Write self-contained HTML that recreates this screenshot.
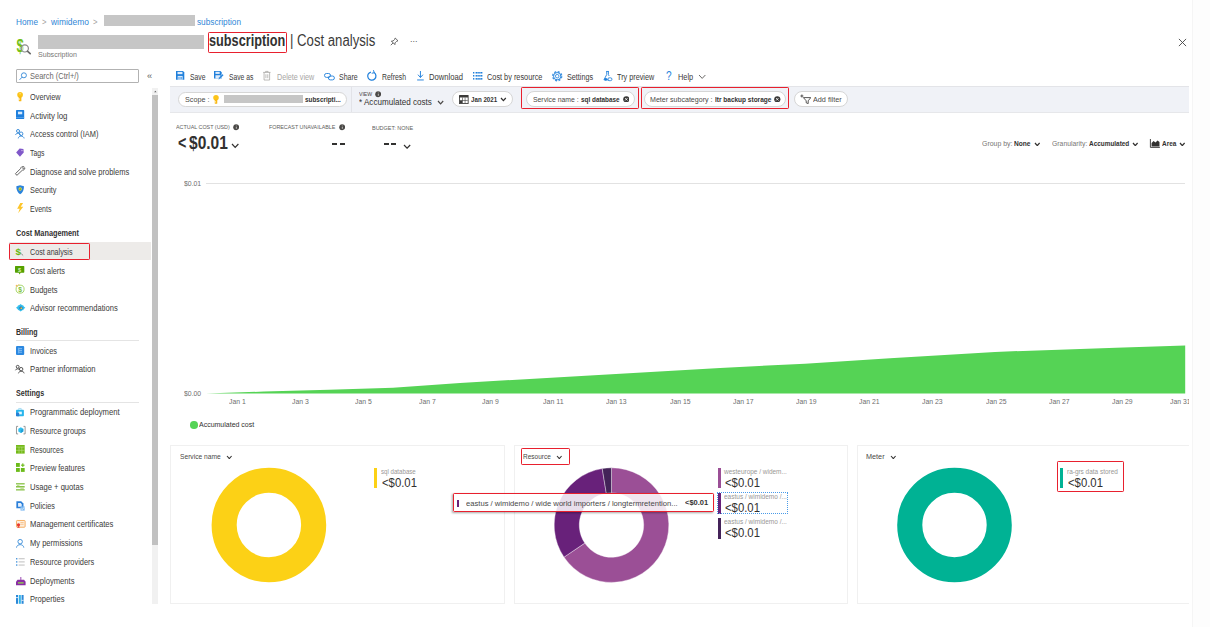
<!DOCTYPE html>
<html lang="en"><head><meta charset="utf-8"><title>Cost analysis</title>
<style>
html,body{margin:0;padding:0;background:#fff;}
body{width:1210px;height:627px;position:relative;overflow:hidden;font-family:"Liberation Sans",sans-serif;}
.t{position:absolute;white-space:nowrap;transform-origin:0 50%;display:block;}
.b{position:absolute;display:block;}
</style></head><body>
<div class="b" style="left:1192.00px;top:0.00px;width:18.00px;height:627.00px;background:#fdfdfd;border-left:1px solid #f5f5f5;"></div>
<span class="t" style="left:16.00px;top:17.24px;font-size:8.6px;line-height:10.32px;color:#2f86d6;transform:scaleX(0.9590);">Home</span>
<span class="t" style="left:42.00px;top:17.24px;font-size:8.6px;line-height:10.32px;color:#a3a19f;transform:scaleX(0.8960);">&gt;</span>
<span class="t" style="left:50.50px;top:17.24px;font-size:8.6px;line-height:10.32px;color:#2f86d6;transform:scaleX(0.9817);">wimidemo</span>
<span class="t" style="left:93.00px;top:17.24px;font-size:8.6px;line-height:10.32px;color:#a3a19f;transform:scaleX(0.8960);">&gt;</span>
<div class="b" style="left:104.00px;top:15.20px;width:91.00px;height:11.30px;background:#c6c6c6;"></div>
<span class="t" style="left:197.30px;top:17.24px;font-size:8.6px;line-height:10.32px;color:#2f86d6;transform:scaleX(0.9588);">subscription</span>
<svg class="b" style="left:16.00px;top:37.00px;" width="16.00" height="18.00" viewBox="0 0 16.00 18.00">
<text transform="translate(0.6 14.6) scale(0.74 1)" font-family="Liberation Sans, sans-serif" font-weight="bold" font-size="17.6" fill="#74c11a">$</text>
<circle cx="8.8" cy="11.4" r="3.6" fill="#fff" fill-opacity="0.55" stroke="#8a8a8a" stroke-width="1.2"/>
<path d="M11.4 14.2 L14.2 16.6" stroke="#6a6a6a" stroke-width="1.7" stroke-linecap="round"/>
</svg>
<div class="b" style="left:38.10px;top:35.40px;width:165.50px;height:13.60px;background:#c6c6c6;"></div>
<span class="t" style="left:208.60px;top:31.00px;font-size:16px;line-height:19.2px;color:#323130;font-weight:bold;transform:scaleX(0.7937);">subscription</span>
<span class="t" style="left:290.20px;top:31.00px;font-size:16px;line-height:19.2px;color:#3b3a39;transform:scaleX(0.8222);">| Cost analysis</span>
<div class="b" style="left:208.20px;top:32.20px;width:79.30px;height:21.10px;border:1.9px solid #e8202e;box-sizing:border-box;border-radius:1.2px;"></div>
<span class="t" style="left:38.00px;top:51.44px;font-size:6.6px;line-height:7.92px;color:#7a7876;transform:scaleX(1.0738);">Subscription</span>
<svg class="b" style="left:390.00px;top:37.00px;" width="9.00" height="9.00" viewBox="0 0 9.00 9.00"><g fill="none" stroke="#444" stroke-width="0.8" stroke-linejoin="round">
<path d="M5.2 1 L8 3.8 L6.6 4.3 L5 5.9 L4.9 7.6 L1.4 4.1 L3.1 4 L4.7 2.4 Z"/><path d="M3.1 5.9 L0.8 8.2"/></g></svg>
<span class="t" style="left:409.80px;top:36.20px;font-size:9px;line-height:10.8px;color:#444;transform:scaleX(0.8341);">···</span>
<svg class="b" style="left:1178.00px;top:37.50px;" width="9.00" height="9.00" viewBox="0 0 9.00 9.00"><path d="M0.9 0.9 L8.1 8.1 M8.1 0.9 L0.9 8.1" stroke="#444" stroke-width="0.9" fill="none"/></svg>
<div class="b" style="left:15.60px;top:69.00px;width:123.40px;height:14.00px;border:1px solid #b2b2b2;box-sizing:border-box;border-radius:1px;"></div>
<svg class="b" style="left:19.00px;top:72.00px;" width="8.00" height="8.50" viewBox="0 0 8.00 8.50"><circle cx="4.9" cy="3.3" r="2.5" fill="none" stroke="#2f86d6" stroke-width="0.9"/><path d="M3.1 5.1 L0.6 7.8" stroke="#2f86d6" stroke-width="0.9"/></svg>
<span class="t" style="left:30.20px;top:71.16px;font-size:8.4px;line-height:10.08px;color:#6b6967;transform:scaleX(0.8934);">Search (Ctrl+/)</span>
<span class="t" style="left:147.20px;top:70.70px;font-size:8.5px;line-height:10.2px;color:#605e5c;transform:scaleX(1.1000);">«</span>
<div class="b" style="left:151.70px;top:87.80px;width:6.70px;height:516.20px;background:#f1f1f1;"></div>
<div class="b" style="left:151.70px;top:95.30px;width:6.70px;height:450.00px;background:#c1c1c1;"></div>
<svg class="b" style="left:151.70px;top:88.00px;" width="6.70" height="7.00" viewBox="0 0 6.70 7.00"><path d="M2.1 4.3 L3.35 2.8 L4.6 4.3 Z" fill="#606060"/></svg>
<div class="b" style="left:9.40px;top:242.20px;width:141.90px;height:18.20px;background:#edebe9;"></div>
<div class="b" style="left:9.40px;top:243.00px;width:80.20px;height:16.60px;border:1.9px solid #e8202e;box-sizing:border-box;border-radius:1.2px;"></div>
<span class="t" style="left:30.20px;top:92.14px;font-size:8.6px;line-height:10.32px;color:#3b3a39;transform:scaleX(0.8538);">Overview</span>
<span class="t" style="left:30.20px;top:110.74px;font-size:8.6px;line-height:10.32px;color:#3b3a39;transform:scaleX(0.9124);">Activity log</span>
<span class="t" style="left:30.20px;top:129.44px;font-size:8.6px;line-height:10.32px;color:#3b3a39;transform:scaleX(0.8635);">Access control (IAM)</span>
<span class="t" style="left:30.20px;top:148.04px;font-size:8.6px;line-height:10.32px;color:#3b3a39;transform:scaleX(0.7982);">Tags</span>
<span class="t" style="left:30.20px;top:166.64px;font-size:8.6px;line-height:10.32px;color:#3b3a39;transform:scaleX(0.8764);">Diagnose and solve problems</span>
<span class="t" style="left:30.20px;top:185.34px;font-size:8.6px;line-height:10.32px;color:#3b3a39;transform:scaleX(0.8530);">Security</span>
<span class="t" style="left:30.20px;top:204.24px;font-size:8.6px;line-height:10.32px;color:#3b3a39;transform:scaleX(0.8178);">Events</span>
<span class="t" style="left:15.70px;top:227.84px;font-size:8.6px;line-height:10.32px;color:#323130;font-weight:bold;transform:scaleX(0.8506);">Cost Management</span>
<span class="t" style="left:30.20px;top:246.84px;font-size:8.6px;line-height:10.32px;color:#3b3a39;transform:scaleX(0.8310);">Cost analysis</span>
<span class="t" style="left:30.20px;top:265.74px;font-size:8.6px;line-height:10.32px;color:#3b3a39;transform:scaleX(0.8515);">Cost alerts</span>
<span class="t" style="left:30.20px;top:284.54px;font-size:8.6px;line-height:10.32px;color:#3b3a39;transform:scaleX(0.8714);">Budgets</span>
<span class="t" style="left:30.20px;top:303.24px;font-size:8.6px;line-height:10.32px;color:#3b3a39;transform:scaleX(0.8831);">Advisor recommendations</span>
<span class="t" style="left:15.70px;top:326.64px;font-size:8.6px;line-height:10.32px;color:#323130;font-weight:bold;transform:scaleX(0.8183);">Billing</span>
<div class="b" style="left:15.60px;top:340.20px;width:123.40px;height:0.80px;background:#e4e4e4;"></div>
<span class="t" style="left:30.20px;top:345.64px;font-size:8.6px;line-height:10.32px;color:#3b3a39;transform:scaleX(0.8558);">Invoices</span>
<span class="t" style="left:30.20px;top:364.34px;font-size:8.6px;line-height:10.32px;color:#3b3a39;transform:scaleX(0.8956);">Partner information</span>
<span class="t" style="left:15.70px;top:387.84px;font-size:8.6px;line-height:10.32px;color:#323130;font-weight:bold;transform:scaleX(0.8312);">Settings</span>
<div class="b" style="left:15.60px;top:402.00px;width:123.40px;height:0.80px;background:#e4e4e4;"></div>
<span class="t" style="left:30.20px;top:407.04px;font-size:8.6px;line-height:10.32px;color:#3b3a39;transform:scaleX(0.8937);">Programmatic deployment</span>
<span class="t" style="left:30.20px;top:425.84px;font-size:8.6px;line-height:10.32px;color:#3b3a39;transform:scaleX(0.8520);">Resource groups</span>
<span class="t" style="left:30.20px;top:444.54px;font-size:8.6px;line-height:10.32px;color:#3b3a39;transform:scaleX(0.8150);">Resources</span>
<span class="t" style="left:30.20px;top:463.24px;font-size:8.6px;line-height:10.32px;color:#3b3a39;transform:scaleX(0.8587);">Preview features</span>
<span class="t" style="left:30.20px;top:482.04px;font-size:8.6px;line-height:10.32px;color:#3b3a39;transform:scaleX(0.8846);">Usage + quotas</span>
<span class="t" style="left:30.20px;top:500.64px;font-size:8.6px;line-height:10.32px;color:#3b3a39;transform:scaleX(0.8436);">Policies</span>
<span class="t" style="left:30.20px;top:519.34px;font-size:8.6px;line-height:10.32px;color:#3b3a39;transform:scaleX(0.8912);">Management certificates</span>
<span class="t" style="left:30.20px;top:537.94px;font-size:8.6px;line-height:10.32px;color:#3b3a39;transform:scaleX(0.8789);">My permissions</span>
<span class="t" style="left:30.20px;top:556.84px;font-size:8.6px;line-height:10.32px;color:#3b3a39;transform:scaleX(0.8623);">Resource providers</span>
<span class="t" style="left:30.20px;top:575.84px;font-size:8.6px;line-height:10.32px;color:#3b3a39;transform:scaleX(0.8866);">Deployments</span>
<span class="t" style="left:30.20px;top:594.44px;font-size:8.6px;line-height:10.32px;color:#3b3a39;transform:scaleX(0.8802);">Properties</span>
<svg class="b" style="left:16.70px;top:91.70px;overflow:visible;" width="6.20" height="9.60" viewBox="0 0 10 15.5" preserveAspectRatio="none"><circle cx="5" cy="4.6" r="4.6" fill="#fcc419"/><rect x="2.9" y="7" width="4.2" height="8" rx="1" fill="#f9b915"/><rect x="2.9" y="10.6" width="1.8" height="1.6" fill="#fff"/><circle cx="5" cy="2.9" r="1.1" fill="#fde58a"/></svg>
<svg class="b" style="left:16.20px;top:110.40px;overflow:visible;" width="8.20" height="9.10" viewBox="0 0 10 11" preserveAspectRatio="none"><rect x="0" y="0" width="10" height="11" rx="0.8" fill="#1e7fdd"/><rect x="2.4" y="2" width="5.2" height="3.2" fill="#d6e9fb"/><rect x="0" y="8.6" width="10" height="0.9" fill="#5ea6ec"/></svg>
<svg class="b" style="left:15.30px;top:128.60px;overflow:visible;" width="9.50" height="9.60" viewBox="0 0 10 10" preserveAspectRatio="none"><g fill="none" stroke="#2f86d6" stroke-width="0.95"><circle cx="3.2" cy="2.1" r="1.6"/><path d="M0.6 6.2 C0.8 4 5.4 4 5.8 6"/><circle cx="6.4" cy="5" r="1.9"/><path d="M3.4 9.8 C3.8 6.6 9 6.6 9.6 9.8"/></g></svg>
<svg class="b" style="left:16.40px;top:147.70px;overflow:visible;" width="7.90" height="9.00" viewBox="0 0 10 11" preserveAspectRatio="none"><path d="M4.6 0.6 L9.4 1.2 L9.8 5.6 L5 10.6 L0.2 5.6 Z" fill="#8058c9"/><circle cx="7.6" cy="3.2" r="0.9" fill="#d9cdf2"/></svg>
<svg class="b" style="left:15.10px;top:166.20px;overflow:visible;" width="10.20" height="9.60" viewBox="0 0 10 10" preserveAspectRatio="none"><path d="M1 9 L0.4 8 L5.6 2.6 C5.6 1.2 7 0.2 8.6 0.6 L7.4 2 L8.2 3 L9.6 1.8 C9.8 3.4 8.6 4.6 7.2 4.4 L2 9.6 Z" fill="none" stroke="#555" stroke-width="0.9" stroke-linejoin="round"/></svg>
<svg class="b" style="left:16.40px;top:185.40px;overflow:visible;" width="8.30" height="9.50" viewBox="0 0 10 11.4" preserveAspectRatio="none"><path d="M5 0.2 L9.6 1.6 C9.8 6 8 9.4 5 11.2 C2 9.4 0.2 6 0.4 1.6 Z" fill="#2a84dc"/><circle cx="5" cy="4.8" r="2" fill="#f5d04a"/><path d="M3.6 5.6 L6.4 5.6 L5 3.4Z" fill="#6bb700"/></svg>
<svg class="b" style="left:17.00px;top:203.20px;overflow:visible;" width="6.40" height="10.20" viewBox="0 0 10 16" preserveAspectRatio="none"><path d="M5.2 0 L0.2 9.2 L4.2 9.2 L1.8 16 L9.8 5.8 L5.8 5.8 L9.6 0 Z" fill="#fdc52a"/></svg>
<svg class="b" style="left:16.10px;top:247.00px;overflow:visible;" width="7.30" height="9.00" viewBox="0 0 10 12.3" preserveAspectRatio="none"><text x="-0.6" y="10.9" font-family="Liberation Sans, sans-serif" font-weight="bold" font-size="13.6" fill="#66b80f">$</text><path d="M7 8.8 L9.8 11.6" stroke="#7a7a7a" stroke-width="1.2"/></svg>
<svg class="b" style="left:15.40px;top:265.50px;overflow:visible;" width="9.30" height="8.70" viewBox="0 0 10 9.4" preserveAspectRatio="none"><path d="M0.6 0 H9.4 Q10 0 10 0.6 V6.6 Q10 7.2 9.4 7.2 H6 L5 9.2 L4 7.2 H0.6 Q0 7.2 0 6.6 V0.6 Q0 0 0.6 0Z" fill="#55a100"/><text x="3.3" y="6" font-family="Liberation Sans, sans-serif" font-weight="bold" font-size="6" fill="#d8efb8">$</text></svg>
<svg class="b" style="left:15.40px;top:284.00px;overflow:visible;" width="9.60" height="9.60" viewBox="0 0 10 10" preserveAspectRatio="none"><circle cx="5.3" cy="5.4" r="4.2" fill="none" stroke="#a4d465" stroke-width="1"/><text x="3.4" y="8" font-family="Liberation Sans, sans-serif" font-weight="bold" font-size="7" fill="#7dc13c">$</text><circle cx="1.7" cy="1.9" r="1" fill="#f7b45a"/><circle cx="4" cy="0.6" r="0.7" fill="#f7c878"/></svg>
<svg class="b" style="left:15.70px;top:304.40px;overflow:visible;" width="9.30" height="7.60" viewBox="0 0 10 8.2" preserveAspectRatio="none"><path d="M5 0 L10 4 L5 8.2 L0 4 Z" fill="#33bdeb"/><path d="M2 1.6 H8 V6.6 H2Z" fill="#33bdeb"/><circle cx="5.3" cy="4.3" r="1.7" fill="#2b5ea8"/><circle cx="5.6" cy="4.5" r="0.9" fill="#f3d03a"/></svg>
<svg class="b" style="left:16.10px;top:345.70px;overflow:visible;" width="8.20" height="9.00" viewBox="0 0 10 11" preserveAspectRatio="none"><rect width="10" height="11" rx="1.3" fill="#2b88e0"/><g stroke="#9fcdf6" stroke-width="0.9"><path d="M3 3.2 H7.4 M3 5.4 H7.4 M3 7.6 H7.4"/></g><rect x="2.4" y="2" width="1.6" height="7" fill="#6db3f2"/></svg>
<svg class="b" style="left:15.40px;top:364.90px;overflow:visible;" width="9.60" height="8.50" viewBox="0 0 10 9" preserveAspectRatio="none"><g fill="none" stroke="#4a4a4a" stroke-width="1"><circle cx="2.8" cy="1.9" r="1.5"/><path d="M0.5 5.6 C0.7 3.6 4.8 3.6 5.2 5.4"/><circle cx="6.4" cy="4.4" r="1.8"/><path d="M3.6 8.8 C4 6 9 6 9.6 8.8"/></g></svg>
<svg class="b" style="left:16.10px;top:408.20px;overflow:visible;" width="7.90" height="8.30" viewBox="0 0 10 10.5" preserveAspectRatio="none"><path d="M3.4 2.2 V0.6 H6.6 V2.2" fill="none" stroke="#8fd3f0" stroke-width="0.9"/><rect x="0" y="2.2" width="10" height="8.2" rx="1" fill="#28b5ec"/><path d="M3 4.6 H7.4 V8 H3Z" fill="#e8f6fd"/><path d="M0 6 H4 V10.4 H1 Q0 10.4 0 9.4Z" fill="#2a7fd4"/></svg>
<svg class="b" style="left:15.60px;top:426.40px;overflow:visible;" width="9.60" height="8.30" viewBox="0 0 10 8.6" preserveAspectRatio="none"><path d="M2.2 0.4 H0.5 V8.2 H2.2 M7.8 0.4 H9.5 V8.2 H7.8" fill="none" stroke="#8a8a8a" stroke-width="0.9"/><path d="M5 1.4 L7.6 2.8 V5.8 L5 7.2 L2.4 5.8 V2.8Z" fill="#32bfee"/><path d="M5 4.2 L7.6 2.8 V5.8 L5 7.2Z" fill="#1e9fd6"/></svg>
<svg class="b" style="left:16.00px;top:445.20px;overflow:visible;" width="8.70" height="8.60" viewBox="0 0 10 10" preserveAspectRatio="none"><rect width="10" height="10" fill="#73b917"/><g stroke="#b9de86" stroke-width="0.7"><path d="M3.5 2.4 V10 M6.7 2.4 V10 M0 2.4 H10 M0 6.2 H10"/></g></svg>
<svg class="b" style="left:16.00px;top:463.40px;overflow:visible;" width="8.70" height="8.90" viewBox="0 0 10 10" preserveAspectRatio="none"><g fill="#6cbb1a"><rect x="0" y="0" width="4.4" height="4.4"/><rect x="0" y="5.6" width="4.4" height="4.4"/><rect x="5.6" y="5.6" width="4.4" height="4.4"/><rect x="7.2" y="0.4" width="1.3" height="4"/><rect x="5.8" y="1.8" width="4" height="1.3"/></g></svg>
<svg class="b" style="left:16.00px;top:483.00px;overflow:visible;" width="8.70" height="7.70" viewBox="0 0 10 8.8" preserveAspectRatio="none"><g fill="#76b82a"><rect x="0" y="0.3" width="10" height="1.3"/><rect x="0" y="3.6" width="10" height="1.5"/><rect x="0" y="7.2" width="10" height="1.3"/><rect x="1" y="2.2" width="3" height="0.9" fill="#a9d46f"/><rect x="5" y="5.6" width="4" height="0.9" fill="#a9d46f"/></g></svg>
<svg class="b" style="left:16.00px;top:501.00px;overflow:visible;" width="8.70" height="9.60" viewBox="0 0 10 11" preserveAspectRatio="none"><path d="M0.4 0.2 H6 L8.6 2.8 V8.4 H0.4Z" fill="#2b7fd9"/><path d="M2.4 2.4 H5.4 L6.6 3.6 V6.6 H2.4Z" fill="#e4f0fc"/><path d="M5.2 6.2 H10 V11 H5.2Z" fill="#7db9f1"/><path d="M6 8.8 L7.2 9.9 L9.2 7.4" stroke="#fff" stroke-width="0.8" fill="none"/></svg>
<svg class="b" style="left:15.60px;top:519.60px;overflow:visible;" width="9.60" height="8.30" viewBox="0 0 10 8.6" preserveAspectRatio="none"><rect x="0.5" y="0.5" width="9" height="7" rx="0.8" fill="#fdeedd" stroke="#f3a24e" stroke-width="0.9"/><path d="M4.6 2.6 H8 M4.6 4.4 H8" stroke="#f3b26e" stroke-width="0.7"/><circle cx="2.6" cy="5" r="1.7" fill="#e8382f"/><path d="M1.8 6.4 L1.6 8.6 L2.6 7.8 L3.6 8.6 L3.4 6.4Z" fill="#e8382f"/></svg>
<svg class="b" style="left:16.40px;top:538.70px;overflow:visible;" width="8.30" height="8.80" viewBox="0 0 10 10.6" preserveAspectRatio="none"><g fill="none" stroke="#2f86d6" stroke-width="1.05"><circle cx="5" cy="3.2" r="2.7"/><path d="M0.6 10.4 C1 5.6 9 5.6 9.4 10.4"/></g></svg>
<svg class="b" style="left:16.00px;top:557.80px;overflow:visible;" width="8.70" height="8.00" viewBox="0 0 10 9.2" preserveAspectRatio="none"><g fill="#2f86d6"><rect x="0" y="0.2" width="1.6" height="1.4"/><rect x="0" y="3.8" width="1.6" height="1.4"/><rect x="0" y="7.4" width="1.6" height="1.4"/></g><g fill="#b5b5b5"><rect x="3" y="0.4" width="7" height="1"/><rect x="3" y="4" width="7" height="1"/><rect x="3" y="7.6" width="7" height="1"/></g></svg>
<svg class="b" style="left:15.60px;top:576.70px;overflow:visible;" width="9.60" height="8.30" viewBox="0 0 10 8.6" preserveAspectRatio="none"><rect x="4.6" y="0" width="0.9" height="3" fill="#8a2da5"/><path d="M1.6 2.8 H8.4 L10 5 V8.6 H0 V5Z" fill="#8a2da5"/><rect x="2" y="5.4" width="6" height="1.4" fill="#8fd14f"/></svg>
<svg class="b" style="left:16.40px;top:595.30px;overflow:visible;" width="7.60" height="8.80" viewBox="0 0 10 11.5" preserveAspectRatio="none"><g fill="#2b88d8"><rect x="0" y="0" width="2.7" height="11.5"/><rect x="3.7" y="0" width="2.7" height="11.5" fill="#32b5ea"/><rect x="7.3" y="0" width="2.7" height="11.5"/></g><rect x="0" y="3" width="2.7" height="1" fill="#fff"/><rect x="7.3" y="6.4" width="2.7" height="1" fill="#fff"/></svg>
<svg class="b" style="left:175.80px;top:71.20px;overflow:visible;" width="8.30" height="8.80" viewBox="0 0 10 10" preserveAspectRatio="none"><path d="M0 0 H8.4 L10 1.6 V10 H0Z" fill="#1f7fdb"/><rect x="1.8" y="1" width="6" height="2.6" fill="#dcebfb"/><rect x="2" y="5.6" width="6" height="4.4" fill="#dcebfb"/><path d="M3.4 6.8 V9.4 M5 6.8 V9.4 M6.6 6.8 V9.4" stroke="#1f7fdb" stroke-width="0.7"/></svg>
<span class="t" style="left:189.70px;top:71.66px;font-size:8.4px;line-height:10.08px;color:#3b3a39;transform:scaleX(0.8096);">Save</span>
<svg class="b" style="left:214.20px;top:71.20px;overflow:visible;" width="9.80" height="9.20" viewBox="0 0 11 10.4" preserveAspectRatio="none"><path d="M0 0 H7.2 L8.6 1.4 V8.6 H0Z" fill="#1f7fdb"/><rect x="1.6" y="0.9" width="4.8" height="2.4" fill="#dcebfb"/><rect x="1.6" y="4.8" width="5.2" height="3.8" fill="#dcebfb"/><path d="M4.6 9.6 L5.2 7.6 L9.4 3.4 L10.8 4.8 L6.6 9 Z" fill="#1f7fdb" stroke="#fff" stroke-width="0.5"/></svg>
<span class="t" style="left:228.60px;top:71.66px;font-size:8.4px;line-height:10.08px;color:#3b3a39;transform:scaleX(0.8039);">Save as</span>
<svg class="b" style="left:263.40px;top:70.90px;overflow:visible;" width="7.70" height="9.50" viewBox="0 0 10 12.2" preserveAspectRatio="none"><g fill="none" stroke="#9a9896" stroke-width="0.85"><path d="M0.2 1.8 H9.8 M3.4 1.8 V0.5 H6.6 V1.8 M1.4 1.8 V11.6 H8.6 V1.8"/><path d="M3.8 4.2 V9.2 M6.2 4.2 V9.2"/></g></svg>
<span class="t" style="left:277.00px;top:71.66px;font-size:8.4px;line-height:10.08px;color:#a8a6a4;transform:scaleX(0.8614);">Delete view</span>
<svg class="b" style="left:324.30px;top:72.60px;overflow:visible;" width="10.90" height="7.40" viewBox="0 0 13.4 8.8" preserveAspectRatio="none"><g fill="none" stroke="#1f7fdb" stroke-width="1.1"><rect x="0.6" y="0.6" width="7.4" height="4.6" rx="2.3"/><rect x="5.4" y="3.6" width="7.4" height="4.6" rx="2.3"/></g></svg>
<span class="t" style="left:338.60px;top:71.66px;font-size:8.4px;line-height:10.08px;color:#3b3a39;transform:scaleX(0.8387);">Share</span>
<svg class="b" style="left:366.80px;top:70.40px;overflow:visible;" width="9.80" height="10.60" viewBox="0 0 10 10.8" preserveAspectRatio="none"><path d="M4.0 2.1 A4.2 4.2 0 1 0 7.1 2.6" fill="none" stroke="#1f7fdb" stroke-width="1.25"/><path d="M6.6 0.2 L7.4 2.8 L4.8 3.3" fill="none" stroke="#1f7fdb" stroke-width="1.0"/></svg>
<span class="t" style="left:381.60px;top:71.66px;font-size:8.4px;line-height:10.08px;color:#3b3a39;transform:scaleX(0.8160);">Refresh</span>
<svg class="b" style="left:416.50px;top:71.00px;overflow:visible;" width="6.90" height="9.60" viewBox="0 0 10 12" preserveAspectRatio="none"><g fill="none" stroke="#1f7fdb" stroke-width="1.25"><path d="M5 0 V8 M1.4 4.6 L5 8.2 L8.6 4.6 M0.2 11.2 H9.8"/></g></svg>
<span class="t" style="left:429.40px;top:71.66px;font-size:8.4px;line-height:10.08px;color:#3b3a39;transform:scaleX(0.9128);">Download</span>
<svg class="b" style="left:472.60px;top:72.40px;overflow:visible;" width="9.40" height="7.60" viewBox="0 0 12.4 8" preserveAspectRatio="none"><g fill="#1f7fdb"><rect x="0" y="0" width="1.8" height="1.6"/><rect x="0" y="3.2" width="1.8" height="1.6"/><rect x="0" y="6.4" width="1.8" height="1.6"/><rect x="3.4" y="0" width="9" height="1.6"/><rect x="3.4" y="3.2" width="9" height="1.6"/><rect x="3.4" y="6.4" width="9" height="1.6"/></g><path d="M6.4 0 V8 M9.4 0 V8" stroke="#fff" stroke-width="0.6"/></svg>
<span class="t" style="left:487.30px;top:71.66px;font-size:8.4px;line-height:10.08px;color:#3b3a39;transform:scaleX(0.8757);">Cost by resource</span>
<svg class="b" style="left:551.90px;top:70.60px;overflow:visible;" width="10.40" height="10.40" viewBox="0 0 10 10" preserveAspectRatio="none"><circle cx="5" cy="5" r="4.35" fill="none" stroke="#1f7fdb" stroke-width="1.3" stroke-dasharray="1.9 1.517" stroke-opacity="0.85"/><circle cx="5" cy="5" r="3.5" fill="none" stroke="#1f7fdb" stroke-width="0.9"/><circle cx="5" cy="5" r="1.7" fill="none" stroke="#1f7fdb" stroke-width="0.8"/></svg>
<span class="t" style="left:566.80px;top:71.66px;font-size:8.4px;line-height:10.08px;color:#3b3a39;transform:scaleX(0.8632);">Settings</span>
<svg class="b" style="left:602.90px;top:70.60px;overflow:visible;" width="9.30" height="10.20" viewBox="0 0 10 11" preserveAspectRatio="none"><g fill="none" stroke="#1f7fdb" stroke-width="0.95"><path d="M3.4 0.5 H6.4 M4 0.5 V3.8 L1 9.6 H6 M5.8 0.5 V3.8 L6.6 5.4"/><rect x="5.2" y="7.4" width="4.4" height="3" rx="1.4"/></g><circle cx="3" cy="9" r="1.5" fill="#1f7fdb"/></svg>
<span class="t" style="left:617.10px;top:71.66px;font-size:8.4px;line-height:10.08px;color:#3b3a39;transform:scaleX(0.8655);">Try preview</span>
<span class="t" style="left:666.20px;top:68.30px;font-size:13px;line-height:15.6px;color:#1f7fdb;transform:scaleX(0.7745);">?</span>
<span class="t" style="left:678.30px;top:71.66px;font-size:8.4px;line-height:10.08px;color:#3b3a39;transform:scaleX(0.8798);">Help</span>
<svg class="b" style="left:697.80px;top:74.30px;" width="8.40" height="5.40" viewBox="0 0 8.40 5.40"><path d="M1 1 L4.20 4.40 L7.40 1" fill="none" stroke="#6a6866" stroke-width="1.0"/></svg>
<div class="b" style="left:170.30px;top:86.00px;width:1018.70px;height:26.60px;background:#f0f2f7;border-top:1px solid #e3e4e8;border-bottom:1px solid #e6e7ea;box-sizing:border-box;"></div>
<div class="b" style="left:177.50px;top:91.60px;width:169.50px;height:15.20px;background:#fff;border:1px solid #d6d6d6;box-sizing:border-box;border-radius:8px;"></div>
<span class="t" style="left:184.80px;top:94.64px;font-size:7.6px;line-height:9.12px;color:#4a4846;transform:scaleX(0.9467);">Scope :</span>
<svg class="b" style="left:212.60px;top:94.60px;overflow:visible;" width="6.00" height="8.80" viewBox="0 0 10 14.6" preserveAspectRatio="none"><circle cx="5" cy="4.6" r="4.6" fill="#fcc419"/><rect x="2.9" y="7" width="4.2" height="7.6" rx="1" fill="#f9b915"/><rect x="2.9" y="10.6" width="1.8" height="1.6" fill="#fff"/></svg>
<div class="b" style="left:223.50px;top:94.80px;width:79.90px;height:8.60px;background:#c6c6c6;"></div>
<span class="t" style="left:305.20px;top:94.64px;font-size:7.6px;line-height:9.12px;color:#323130;font-weight:bold;transform:scaleX(0.8393);">subscripti...</span>
<div class="b" style="left:351.20px;top:86.60px;width:0.80px;height:25.40px;background:#e2e3e8;"></div>
<span class="t" style="left:358.90px;top:91.06px;font-size:5.4px;line-height:6.48px;color:#4a4846;transform:scaleX(0.9565);">VIEW</span>
<svg class="b" style="left:375.10px;top:91.20px;" width="6.40" height="6.40" viewBox="0 0 6.40 6.40"><circle cx="3.2" cy="3.2" r="2.95" fill="#4a4846"/><rect x="2.9" y="2.9" width="0.6" height="1.9" fill="#fff"/><rect x="2.9" y="1.6" width="0.6" height="0.7" fill="#fff"/></svg>
<span class="t" style="left:358.90px;top:97.40px;font-size:9.0px;line-height:10.8px;color:#323130;transform:scaleX(0.8983);">* Accumulated costs</span>
<svg class="b" style="left:437.00px;top:100.20px;" width="7.20" height="4.80" viewBox="0 0 7.20 4.80"><path d="M1 1 L3.60 3.80 L6.20 1" fill="none" stroke="#4a4846" stroke-width="1.2"/></svg>
<div class="b" style="left:452.20px;top:91.40px;width:60.60px;height:15.40px;background:#fff;border:1px solid #d6d6d6;box-sizing:border-box;border-radius:8px;"></div>
<svg class="b" style="left:459.10px;top:94.60px;overflow:visible;" width="9.60" height="9.00" viewBox="0 0 10 9.4" preserveAspectRatio="none"><rect x="0" y="0" width="10" height="9.4" rx="0.6" fill="#3b3a39"/><rect x="0.9" y="2.6" width="8.2" height="5.9" fill="#fff"/><g fill="#3b3a39"><rect x="3.4" y="2.6" width="0.6" height="5.9"/><rect x="6" y="2.6" width="0.6" height="5.9"/><rect x="0.9" y="5.2" width="8.2" height="0.6"/><rect x="0.9" y="5.8" width="2.5" height="2.7"/></g></svg>
<span class="t" style="left:471.00px;top:95.14px;font-size:7.6px;line-height:9.12px;color:#323130;font-weight:bold;transform:scaleX(0.8158);">Jan 2021</span>
<svg class="b" style="left:499.80px;top:97.10px;" width="6.80" height="4.60" viewBox="0 0 6.80 4.60"><path d="M1 1 L3.40 3.60 L5.80 1" fill="none" stroke="#323130" stroke-width="1.25"/></svg>
<div class="b" style="left:525.50px;top:91.20px;width:109.90px;height:15.40px;background:#fff;border:1px solid #d6d6d6;box-sizing:border-box;border-radius:8px;"></div>
<span class="t" style="left:532.80px;top:94.64px;font-size:7.6px;line-height:9.12px;color:#4a4846;transform:scaleX(0.9016);">Service name :</span>
<span class="t" style="left:581.00px;top:94.64px;font-size:7.6px;line-height:9.12px;color:#323130;font-weight:bold;transform:scaleX(0.8405);">sql database</span>
<svg class="b" style="left:622.60px;top:95.60px;" width="6.60" height="6.60" viewBox="0 0 6.60 6.60"><circle cx="3.3" cy="3.3" r="3.1" fill="#3b3a39"/><path d="M2.1 2.1 L4.5 4.5 M4.5 2.1 L2.1 4.5" stroke="#fff" stroke-width="0.8"/></svg>
<div class="b" style="left:521.30px;top:87.20px;width:117.40px;height:22.10px;border:1.9px solid #e8202e;box-sizing:border-box;border-radius:1.2px;"></div>
<div class="b" style="left:644.00px;top:91.20px;width:141.60px;height:15.40px;background:#fff;border:1px solid #d6d6d6;box-sizing:border-box;border-radius:8px;"></div>
<span class="t" style="left:649.90px;top:94.64px;font-size:7.6px;line-height:9.12px;color:#4a4846;transform:scaleX(0.9306);">Meter subcategory :</span>
<span class="t" style="left:714.90px;top:94.64px;font-size:7.6px;line-height:9.12px;color:#323130;font-weight:bold;transform:scaleX(0.8560);">ltr backup storage</span>
<svg class="b" style="left:774.30px;top:95.60px;" width="6.60" height="6.60" viewBox="0 0 6.60 6.60"><circle cx="3.3" cy="3.3" r="3.1" fill="#3b3a39"/><path d="M2.1 2.1 L4.5 4.5 M4.5 2.1 L2.1 4.5" stroke="#fff" stroke-width="0.8"/></svg>
<div class="b" style="left:641.20px;top:87.00px;width:147.50px;height:22.30px;border:1.9px solid #e8202e;box-sizing:border-box;border-radius:1.2px;"></div>
<div class="b" style="left:793.60px;top:90.80px;width:54.20px;height:16.00px;background:#fff;border:1px solid #d6d6d6;box-sizing:border-box;border-radius:8px;"></div>
<svg class="b" style="left:799.60px;top:93.60px;" width="11.80" height="10.80" viewBox="0 0 11.80 10.80"><g fill="none" stroke="#3b3a39" stroke-width="0.85"><path d="M3.4 3.6 H10.8 L8.2 6.8 V9.6 L6.2 8.8 V6.8 Z"/><path d="M0.4 2 H3.4 M1.9 0.5 V3.5"/></g></svg>
<span class="t" style="left:813.20px;top:94.64px;font-size:7.6px;line-height:9.12px;color:#4a4846;transform:scaleX(0.9536);">Add filter</span>
<span class="t" style="left:175.90px;top:124.18px;font-size:5.7px;line-height:6.84px;color:#605e5c;transform:scaleX(0.9455);">ACTUAL COST (USD)</span>
<svg class="b" style="left:232.80px;top:124.20px;" width="6.40" height="6.40" viewBox="0 0 6.40 6.40"><circle cx="3.2" cy="3.2" r="2.95" fill="#4a4846"/><rect x="2.9" y="2.9" width="0.6" height="1.9" fill="#fff"/><rect x="2.9" y="1.6" width="0.6" height="0.7" fill="#fff"/></svg>
<span class="t" style="left:177.50px;top:133.38px;font-size:18.2px;line-height:21.84px;color:#323130;font-weight:bold;transform:scaleX(0.7903);">&lt;</span>
<span class="t" style="left:188.60px;top:133.38px;font-size:18.2px;line-height:21.84px;color:#323130;font-weight:bold;transform:scaleX(0.8541);">$0.01</span>
<svg class="b" style="left:231.00px;top:143.30px;" width="8.40" height="5.40" viewBox="0 0 8.40 5.40"><path d="M1 1 L4.20 4.40 L7.40 1" fill="none" stroke="#323130" stroke-width="1.2"/></svg>
<span class="t" style="left:269.10px;top:124.18px;font-size:5.7px;line-height:6.84px;color:#605e5c;transform:scaleX(0.9414);">FORECAST UNAVAILABLE</span>
<svg class="b" style="left:339.00px;top:124.20px;" width="6.40" height="6.40" viewBox="0 0 6.40 6.40"><circle cx="3.2" cy="3.2" r="2.95" fill="#4a4846"/><rect x="2.9" y="2.9" width="0.6" height="1.9" fill="#fff"/><rect x="2.9" y="1.6" width="0.6" height="0.7" fill="#fff"/></svg>
<div class="b" style="left:332.20px;top:142.50px;width:5.00px;height:2.00px;background:#323130;"></div>
<div class="b" style="left:339.50px;top:142.50px;width:5.00px;height:2.00px;background:#323130;"></div>
<span class="t" style="left:372.20px;top:124.88px;font-size:5.7px;line-height:6.84px;color:#605e5c;transform:scaleX(0.9636);">BUDGET: NONE</span>
<div class="b" style="left:384.00px;top:142.50px;width:5.00px;height:2.00px;background:#323130;"></div>
<div class="b" style="left:391.40px;top:142.50px;width:5.00px;height:2.00px;background:#323130;"></div>
<svg class="b" style="left:402.60px;top:144.00px;" width="8.20" height="5.20" viewBox="0 0 8.20 5.20"><path d="M1 1 L4.10 4.20 L7.20 1" fill="none" stroke="#323130" stroke-width="1.2"/></svg>
<span class="t" style="left:981.50px;top:139.24px;font-size:7.6px;line-height:9.12px;color:#777573;transform:scaleX(0.9139);">Group by:</span>
<span class="t" style="left:1014.00px;top:139.24px;font-size:7.6px;line-height:9.12px;color:#323130;font-weight:bold;transform:scaleX(0.8684);">None</span>
<svg class="b" style="left:1033.80px;top:141.70px;" width="6.60" height="4.60" viewBox="0 0 6.60 4.60"><path d="M1 1 L3.30 3.60 L5.60 1" fill="none" stroke="#323130" stroke-width="1.25"/></svg>
<span class="t" style="left:1051.70px;top:139.24px;font-size:7.6px;line-height:9.12px;color:#777573;transform:scaleX(0.8987);">Granularity:</span>
<span class="t" style="left:1089.00px;top:139.24px;font-size:7.6px;line-height:9.12px;color:#323130;font-weight:bold;transform:scaleX(0.8445);">Accumulated</span>
<svg class="b" style="left:1132.30px;top:141.70px;" width="6.60" height="4.60" viewBox="0 0 6.60 4.60"><path d="M1 1 L3.30 3.60 L5.60 1" fill="none" stroke="#323130" stroke-width="1.25"/></svg>
<svg class="b" style="left:1149.60px;top:139.40px;overflow:visible;" width="9.90" height="8.80" viewBox="0 0 10 8.8" preserveAspectRatio="none"><path d="M0.4 0 V8.4 H10" fill="none" stroke="#323130" stroke-width="0.9"/><path d="M1.6 7.6 V4 L3.6 2 L5.6 3.6 L7.6 1.4 L9.6 3 V7.6Z" fill="#323130"/></svg>
<span class="t" style="left:1162.00px;top:139.24px;font-size:7.6px;line-height:9.12px;color:#323130;font-weight:bold;transform:scaleX(0.8462);">Area</span>
<svg class="b" style="left:1178.80px;top:141.70px;" width="6.60" height="4.60" viewBox="0 0 6.60 4.60"><path d="M1 1 L3.30 3.60 L5.60 1" fill="none" stroke="#323130" stroke-width="1.25"/></svg>
<span class="t" style="left:183.80px;top:179.76px;font-size:6.9px;line-height:8.28px;color:#6e6e6e;transform:scaleX(0.9961);">$0.01</span>
<span class="t" style="left:183.80px;top:389.56px;font-size:6.9px;line-height:8.28px;color:#6e6e6e;transform:scaleX(0.9961);">$0.00</span>
<div class="b" style="left:205.60px;top:183.10px;width:979.60px;height:0.80px;background:#e2e2e2;"></div>
<svg class="b" style="left:0;top:0" width="1192" height="400" viewBox="0 0 1192 400"><path d="M205.8 393.5 L264.0 391.6 L329.0 389.8 L393.0 387.7 L460.0 383.0 L590.0 375.4 L720.0 367.9 L805.0 363.7 L890.0 358.2 L995.0 351.9 L1116.0 347.8 L1185.2 345.5 L1185.2 393.5 L205.8 393.5 Z" fill="#55d355"/></svg>
<div class="b" style="left:0;top:395px;width:1189.4px;height:14px;overflow:hidden;">
<span class="t" style="left:229.05px;top:2.66px;font-size:6.9px;line-height:8.28px;color:#6e6e6e;transform:scaleX(0.9894);">Jan 1</span>
<span class="t" style="left:292.25px;top:2.66px;font-size:6.9px;line-height:8.28px;color:#6e6e6e;transform:scaleX(0.9894);">Jan 3</span>
<span class="t" style="left:355.45px;top:2.66px;font-size:6.9px;line-height:8.28px;color:#6e6e6e;transform:scaleX(0.9894);">Jan 5</span>
<span class="t" style="left:418.65px;top:2.66px;font-size:6.9px;line-height:8.28px;color:#6e6e6e;transform:scaleX(0.9894);">Jan 7</span>
<span class="t" style="left:481.85px;top:2.66px;font-size:6.9px;line-height:8.28px;color:#6e6e6e;transform:scaleX(0.9894);">Jan 9</span>
<span class="t" style="left:543.10px;top:2.66px;font-size:6.9px;line-height:8.28px;color:#6e6e6e;transform:scaleX(1.0196);">Jan 11</span>
<span class="t" style="left:606.30px;top:2.66px;font-size:6.9px;line-height:8.28px;color:#6e6e6e;transform:scaleX(0.9944);">Jan 13</span>
<span class="t" style="left:669.50px;top:2.66px;font-size:6.9px;line-height:8.28px;color:#6e6e6e;transform:scaleX(0.9944);">Jan 15</span>
<span class="t" style="left:732.70px;top:2.66px;font-size:6.9px;line-height:8.28px;color:#6e6e6e;transform:scaleX(0.9944);">Jan 17</span>
<span class="t" style="left:795.90px;top:2.66px;font-size:6.9px;line-height:8.28px;color:#6e6e6e;transform:scaleX(0.9944);">Jan 19</span>
<span class="t" style="left:859.10px;top:2.66px;font-size:6.9px;line-height:8.28px;color:#6e6e6e;transform:scaleX(0.9944);">Jan 21</span>
<span class="t" style="left:922.30px;top:2.66px;font-size:6.9px;line-height:8.28px;color:#6e6e6e;transform:scaleX(0.9944);">Jan 23</span>
<span class="t" style="left:985.50px;top:2.66px;font-size:6.9px;line-height:8.28px;color:#6e6e6e;transform:scaleX(0.9944);">Jan 25</span>
<span class="t" style="left:1048.70px;top:2.66px;font-size:6.9px;line-height:8.28px;color:#6e6e6e;transform:scaleX(0.9944);">Jan 27</span>
<span class="t" style="left:1111.90px;top:2.66px;font-size:6.9px;line-height:8.28px;color:#6e6e6e;transform:scaleX(0.9944);">Jan 29</span>
<span class="t" style="left:1170.20px;top:2.66px;font-size:6.9px;line-height:8.28px;color:#6e6e6e;transform:scaleX(0.9944);">Jan 31</span>
</div>
<div class="b" style="left:190.20px;top:421.20px;width:7.60px;height:7.60px;background:#55d355;border-radius:50%;"></div>
<span class="t" style="left:199.00px;top:420.80px;font-size:7.0px;line-height:8.4px;color:#323130;transform:scaleX(0.9991);">Accumulated cost</span>
<div class="b" style="left:170.20px;top:445.20px;width:335.00px;height:158.40px;border:1px solid #f0f0f0;box-sizing:border-box;background:#fff;"></div>
<div class="b" style="left:514.20px;top:445.20px;width:334.00px;height:158.40px;border:1px solid #f0f0f0;box-sizing:border-box;background:#fff;"></div>
<div class="b" style="left:856.9px;top:445.2px;width:332.2px;height:158.4px;overflow:hidden;"><div class="b" style="left:0;top:0;width:340px;height:158.4px;border:1px solid #f0f0f0;box-sizing:border-box;"></div></div>
<svg class="b" style="left:0;top:440px" width="1192" height="170" viewBox="0 440 1192 170"><circle cx="268.9" cy="525.0" r="44.75" fill="none" stroke="#fcd116" stroke-width="25.10"/></svg>
<svg class="b" style="left:0;top:440px" width="1192" height="170" viewBox="0 440 1192 170"><path d="M611.50 467.80 A57.3 57.3 0 1 1 564.00 557.14 L584.80 543.11 A32.2 32.2 0 1 0 611.50 492.90 Z" fill="#9b4f96" stroke="#fff" stroke-opacity="0.75" stroke-width="0.5"/><path d="M564.00 557.14 A57.3 57.3 0 0 1 602.24 468.55 L606.30 493.32 A32.2 32.2 0 0 0 584.80 543.11 Z" fill="#68217a" stroke="#fff" stroke-opacity="0.75" stroke-width="0.5"/><path d="M602.24 468.55 A57.3 57.3 0 0 1 611.50 467.80 L611.50 492.90 A32.2 32.2 0 0 0 606.30 493.32 Z" fill="#442359" stroke="#fff" stroke-opacity="0.75" stroke-width="0.5"/></svg>
<svg class="b" style="left:0;top:440px" width="1192" height="170" viewBox="0 440 1192 170"><circle cx="954.5" cy="525.0" r="44.75" fill="none" stroke="#00b294" stroke-width="25.10"/></svg>
<span class="t" style="left:179.80px;top:453.16px;font-size:7.4px;line-height:8.88px;color:#4a4846;transform:scaleX(0.8996);">Service name</span>
<svg class="b" style="left:226.10px;top:454.70px;" width="6.60" height="4.60" viewBox="0 0 6.60 4.60"><path d="M1 1 L3.30 3.60 L5.60 1" fill="none" stroke="#323130" stroke-width="1.1"/></svg>
<span class="t" style="left:523.30px;top:453.16px;font-size:7.4px;line-height:8.88px;color:#4a4846;transform:scaleX(0.8778);">Resource</span>
<svg class="b" style="left:555.90px;top:454.70px;" width="6.60" height="4.60" viewBox="0 0 6.60 4.60"><path d="M1 1 L3.30 3.60 L5.60 1" fill="none" stroke="#323130" stroke-width="1.1"/></svg>
<div class="b" style="left:520.70px;top:448.00px;width:49.10px;height:16.80px;border:1.9px solid #e8202e;box-sizing:border-box;border-radius:1.2px;"></div>
<span class="t" style="left:866.00px;top:453.16px;font-size:7.4px;line-height:8.88px;color:#4a4846;transform:scaleX(0.9833);">Meter</span>
<svg class="b" style="left:889.80px;top:454.70px;" width="6.60" height="4.60" viewBox="0 0 6.60 4.60"><path d="M1 1 L3.30 3.60 L5.60 1" fill="none" stroke="#323130" stroke-width="1.1"/></svg>
<div class="b" style="left:374.30px;top:467.80px;width:3.00px;height:20.60px;background:#fcd116;"></div>
<span class="t" style="left:380.50px;top:467.92px;font-size:6.8px;line-height:8.16px;color:#9a9896;transform:scaleX(0.9024);">sql database</span>
<span class="t" style="left:381.70px;top:475.56px;font-size:12.4px;line-height:14.88px;color:#323130;transform:scaleX(0.9145);">&lt;$0.01</span>
<div class="b" style="left:717.60px;top:467.80px;width:3.00px;height:20.60px;background:#9b4f96;"></div>
<span class="t" style="left:723.80px;top:467.92px;font-size:6.8px;line-height:8.16px;color:#9a9896;transform:scaleX(0.9510);">westeurope / widem...</span>
<span class="t" style="left:725.00px;top:475.56px;font-size:12.4px;line-height:14.88px;color:#323130;transform:scaleX(0.9145);">&lt;$0.01</span>
<div class="b" style="left:717.60px;top:493.10px;width:3.00px;height:20.60px;background:#68217a;"></div>
<span class="t" style="left:723.80px;top:493.22px;font-size:6.8px;line-height:8.16px;color:#9a9896;transform:scaleX(0.9566);">eastus / wimidemo /...</span>
<span class="t" style="left:725.00px;top:500.86px;font-size:12.4px;line-height:14.88px;color:#323130;transform:scaleX(0.9145);">&lt;$0.01</span>
<div class="b" style="left:717.60px;top:518.20px;width:3.00px;height:20.60px;background:#442359;"></div>
<span class="t" style="left:723.80px;top:518.32px;font-size:6.8px;line-height:8.16px;color:#9a9896;transform:scaleX(0.9566);">eastus / wimidemo /...</span>
<span class="t" style="left:725.00px;top:525.96px;font-size:12.4px;line-height:14.88px;color:#323130;transform:scaleX(0.9145);">&lt;$0.01</span>
<div class="b" style="left:717.40px;top:492.20px;width:70.60px;height:22.10px;border:1px dotted #4a9be8;box-sizing:border-box;"></div>
<div class="b" style="left:1060.40px;top:467.80px;width:3.00px;height:20.60px;background:#00b294;"></div>
<span class="t" style="left:1066.60px;top:467.92px;font-size:6.8px;line-height:8.16px;color:#9a9896;transform:scaleX(0.9484);">ra-grs data stored</span>
<span class="t" style="left:1067.80px;top:475.56px;font-size:12.4px;line-height:14.88px;color:#323130;transform:scaleX(0.9145);">&lt;$0.01</span>
<div class="b" style="left:1057.00px;top:461.00px;width:67.40px;height:31.10px;border:1.9px solid #e8202e;box-sizing:border-box;border-radius:1.2px;"></div>
<div class="b" style="left:453.00px;top:492.90px;width:260.90px;height:19.00px;background:rgba(255,255,255,0.85);box-shadow:-0.6px 1px 2px rgba(0,0,0,0.35);"></div>
<div class="b" style="left:453.00px;top:492.90px;width:260.90px;height:19.00px;border:1.9px solid #e8202e;box-sizing:border-box;border-radius:1.2px;"></div>
<div class="b" style="left:456.90px;top:499.90px;width:2.60px;height:6.70px;background:#68217a;"></div>
<span class="t" style="left:465.80px;top:498.84px;font-size:7.6px;line-height:9.12px;color:#484848;transform:scaleX(1.0049);">eastus / wimidemo / wide world importers / longtermretention...</span>
<span class="t" style="left:685.10px;top:499.00px;font-size:7.0px;line-height:8.4px;color:#323130;font-weight:bold;transform:scaleX(1.0738);">&lt;$0.01</span>
</body></html>
